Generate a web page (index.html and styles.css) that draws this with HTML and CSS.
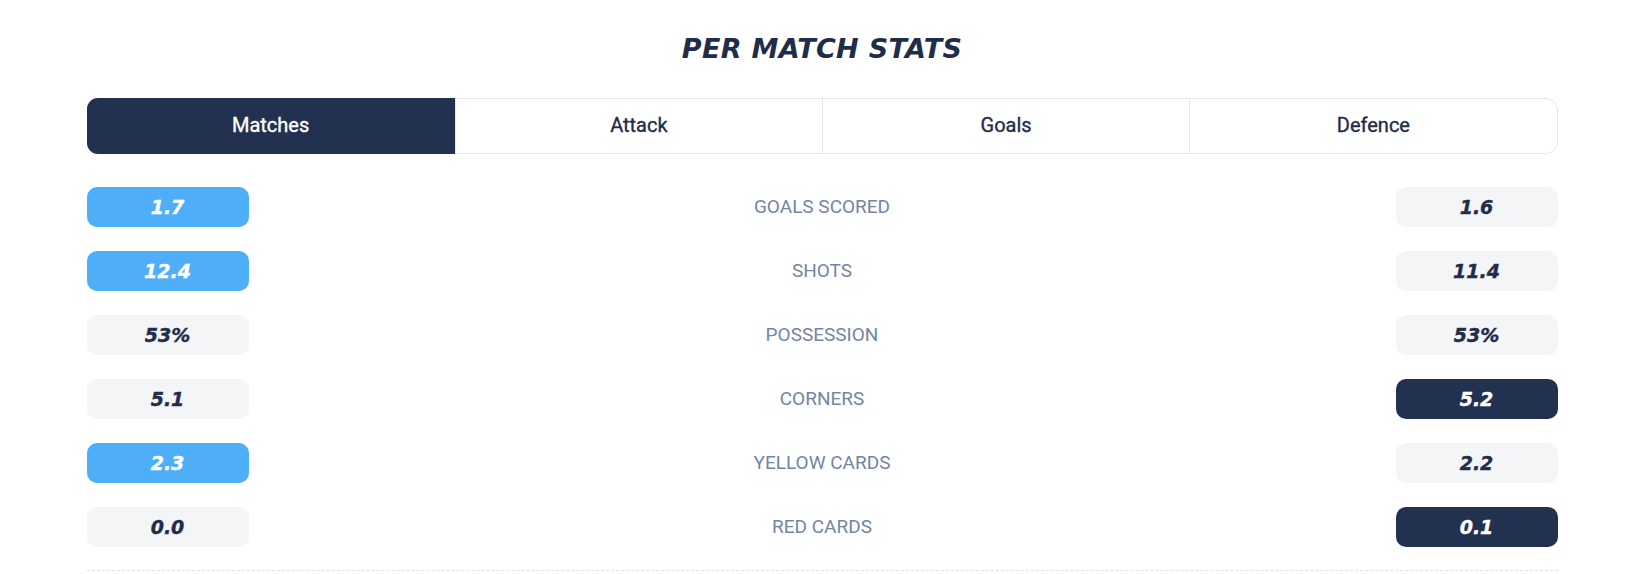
FILE: index.html
```html
<!DOCTYPE html>
<html lang="en">
<head>
<meta charset="utf-8">
<title>Per Match Stats</title>
<link rel="stylesheet" href="styles.css">
</head>
<body>
<section class="stats">
  <h2 class="stats-title">PER MATCH STATS</h2>
  <nav class="tabs">
    <div class="tab tab-active">Matches</div>
    <div class="tab">Attack</div>
    <div class="tab">Goals</div>
    <div class="tab">Defence</div>
  </nav>
  <div class="rows">
    <div class="row">
      <div class="pill pill-blue">1.7</div>
      <div class="label">GOALS SCORED</div>
      <div class="pill pill-gray">1.6</div>
    </div>
    <div class="row">
      <div class="pill pill-blue">12.4</div>
      <div class="label">SHOTS</div>
      <div class="pill pill-gray">11.4</div>
    </div>
    <div class="row">
      <div class="pill pill-gray">53%</div>
      <div class="label">POSSESSION</div>
      <div class="pill pill-gray">53%</div>
    </div>
    <div class="row">
      <div class="pill pill-gray">5.1</div>
      <div class="label">CORNERS</div>
      <div class="pill pill-navy">5.2</div>
    </div>
    <div class="row">
      <div class="pill pill-blue">2.3</div>
      <div class="label">YELLOW CARDS</div>
      <div class="pill pill-gray">2.2</div>
    </div>
    <div class="row">
      <div class="pill pill-gray">0.0</div>
      <div class="label">RED CARDS</div>
      <div class="pill pill-navy">0.1</div>
    </div>
  </div>
  <div class="divider"></div>
</section>
</body>
</html>
```

FILE: styles.css
```css
* { box-sizing: border-box; }
html, body { margin: 0; padding: 0; background: #ffffff; }
body { font-family: Roboto, "Liberation Sans", sans-serif; }

.stats {
  width: 1471px;
  margin: 0 auto;
  padding-top: 32px;
}

.stats-title {
  margin: 0;
  text-align: center;
  font-family: "DejaVu Sans", sans-serif;
  font-weight: 700;
  font-style: italic;
  font-size: 27px;
  line-height: 34px;
  letter-spacing: 0.3px;
  color: #1f2d4a;
}

.tabs {
  margin-top: 32px;
  display: grid;
  grid-template-columns: repeat(4, 1fr);
  height: 56px;
  border: 1px solid #e4e7eb;
  border-radius: 12px;
}

.tab {
  display: flex;
  align-items: center;
  justify-content: center;
  padding-bottom: 2px;
  font-size: 20px;
  font-weight: 400;
  -webkit-text-stroke: 0.35px currentColor;
  color: #1f2d4a;
  border-left: 1px solid #e4e7eb;
}
.tab:first-child { border-left: none; }
.tab-active {
  background: #21314f;
  color: #ffffff;
  border-radius: 11px 0 0 11px;
  margin: -1px 0 -1px -1px;
}

.rows {
  margin-top: 33px;
  display: flex;
  flex-direction: column;
  gap: 24px;
}

.row {
  display: grid;
  grid-template-columns: 162px 1fr 162px;
  align-items: center;
  height: 40px;
}

.pill {
  height: 40px;
  border-radius: 10px;
  display: flex;
  align-items: center;
  justify-content: center;
  font-family: "DejaVu Sans", sans-serif;
  font-weight: 700;
  font-style: italic;
  font-size: 19px;
  -webkit-text-stroke: 0.4px currentColor;
}
.pill-blue { background: #4eaff8; color: #ffffff; }
.pill-gray { background: #f4f5f7; color: #1f2d4a; }
.pill-navy { background: #21314f; color: #ffffff; }

.label {
  text-align: center;
  font-size: 19px;
  padding-bottom: 2px;
  color: #7485a3;
}

.divider {
  margin-top: 23px;
  border-top: 1px dashed #dfe3e8;
}
```
